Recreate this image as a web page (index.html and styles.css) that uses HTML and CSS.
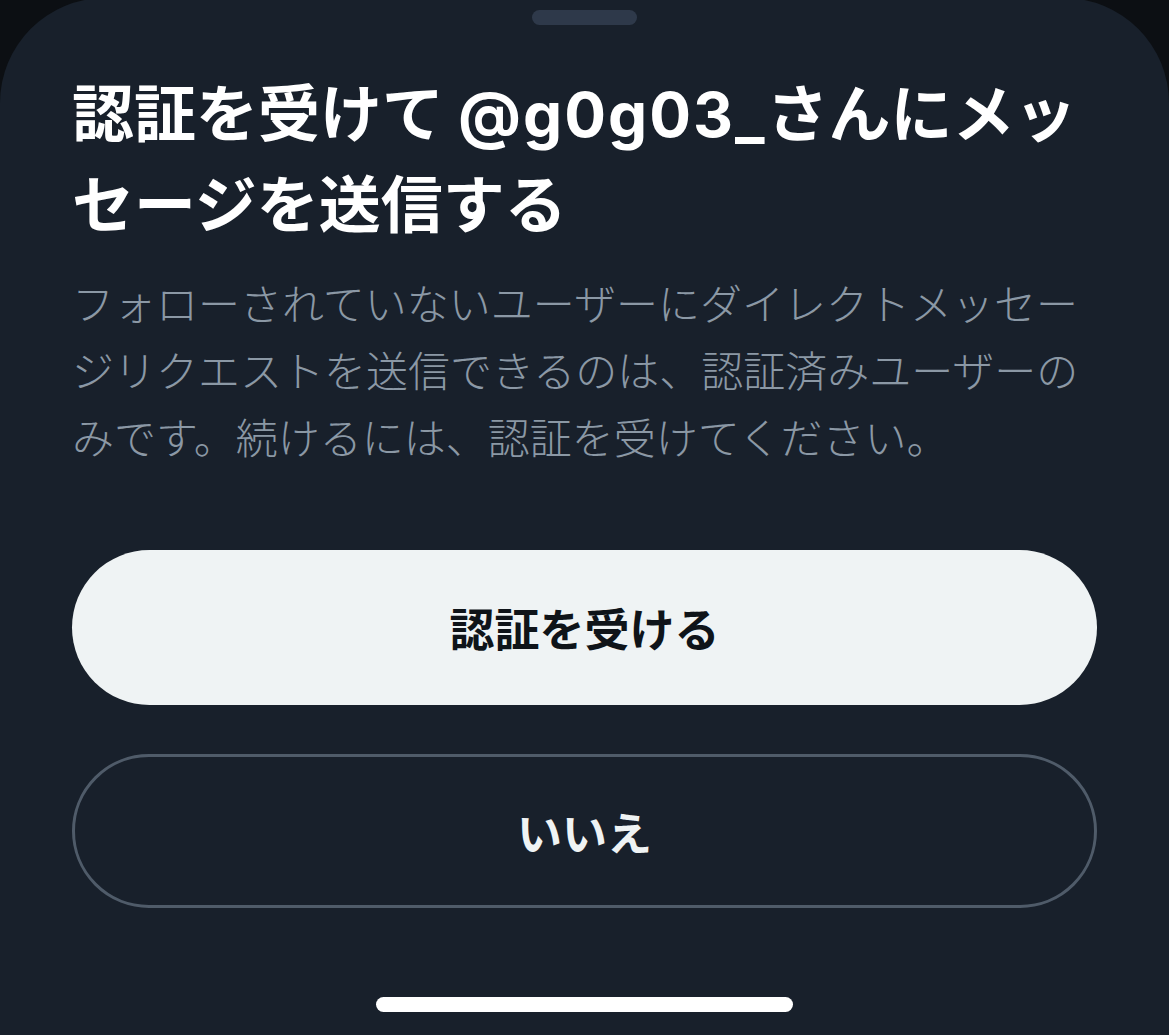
FILE: index.html
```html
<!DOCTYPE html>
<html lang="ja">

<head>
    <meta charset="utf-8" />
    <meta name="viewport" content="width=device-width, initial-scale=1.0" />
    <title>認証を受けてメッセージを送信する</title>
    <link rel="stylesheet" href="styles.css">
</head>

<body>
    <div class="sheet">
        <div class="grabber"></div>

        <h1 class="sheet-title">認証を受けて <span class="handle">@g0g03_</span>さんにメッセージを送信する</h1>
        <p class="sheet-text">フォローされていないユーザーにダイレクトメッセージリクエストを送信できるのは、認証済みユーザーのみです。続けるには、認証を受けてください。</p>

        <div class="actions">
            <button class="btn btn-primary">認証を受ける</button>
            <button class="btn btn-outline">いいえ</button>
        </div>

        <!-- iOS home indicator -->
        <div class="home-bar"></div>
    </div>
</body>

</html>
```

FILE: styles.css
```css
html {
    background: #0c0f13;
    font-family: "Noto Sans CJK JP", "Noto Sans", sans-serif;
}

body {
    margin: 0;
    height: 1035px;
    overflow: hidden;
}

.sheet {
    display: flex;
    flex-direction: column;
    margin-top: -2px;
    height: 1037px;
    padding: 0 72px;
    background: #18202b;
    border-radius: 105px 105px 0 0;
    box-sizing: border-box;
}

.grabber {
    width: 105px;
    height: 15px;
    margin: 12px auto 0;
    border-radius: 8px;
    background: #2e394a;
}

.sheet-title {
    margin: 42px 0 0;
    font-size: 62px;
    line-height: 87px;
    font-weight: 700;
    color: #ffffff;
}

.handle {
    font-family: Inter, "Noto Sans CJK JP", sans-serif;
    letter-spacing: 2px;
}

.sheet-text {
    margin: 23px 0 0;
    font-size: 42px;
    line-height: 67px;
    font-weight: 300;
    color: #8b98a5;
}

.actions {
    display: flex;
    flex-direction: column;
    gap: 49px;
    margin-top: 81px;
}

.btn {
    height: 155px;
    border-radius: 78px;
    font-family: inherit;
    font-size: 45px;
    font-weight: 700;
    cursor: pointer;
}

.btn-primary {
    border: none;
    background: #eff3f4;
    color: #0f1419;
}

.btn-outline {
    height: 154px;
    border: 3px solid #4f5b69;
    background: transparent;
    color: #eff3f4;
}

.home-bar {
    width: 417px;
    height: 15px;
    margin: auto auto 23px;
    border-radius: 8px;
    background: #ffffff;
}
```
